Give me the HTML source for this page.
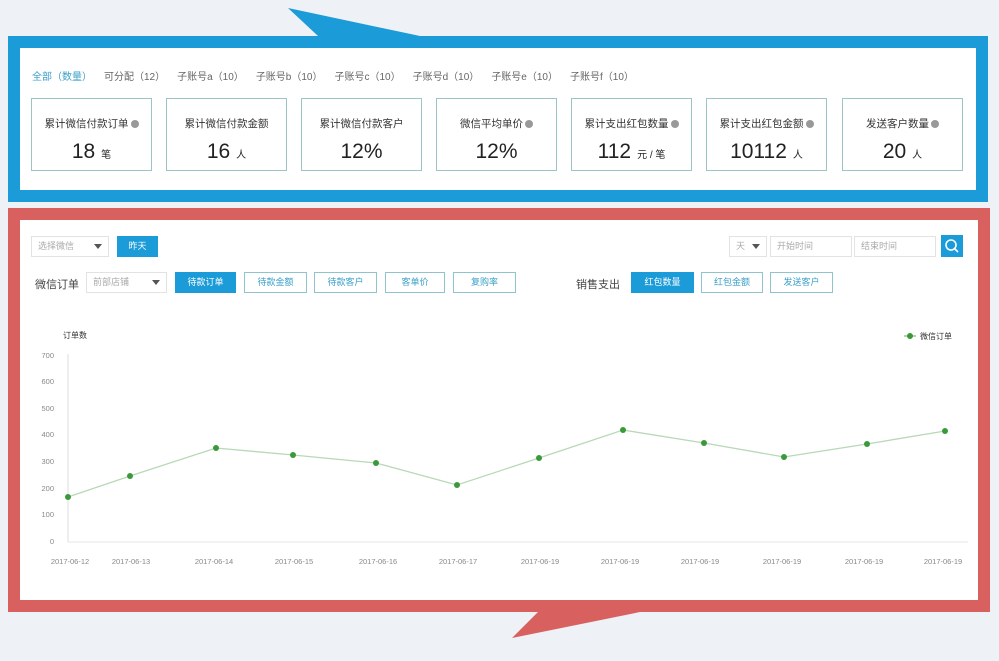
<!DOCTYPE html>
<html><head><meta charset="utf-8"><style>
*{margin:0;padding:0;box-sizing:border-box}
body{width:999px;height:661px;background:#eef1f5;position:relative;overflow:hidden;font-family:"Liberation Sans","Noto Sans CJK SC",sans-serif;color:#333}
.abs{position:absolute}
.blue{left:8px;top:36px;width:980px;height:166px;background:#fff;border:12px solid #1b9bd7}
.red{left:8px;top:208px;width:982px;height:404px;background:#fff;border:12px solid #d8605f}
.tabs{left:32px;top:68px;font-size:10px;color:#666;white-space:nowrap}
.tabs span{margin-right:12px}
.card{top:98px;width:121px;height:73px;border:1px solid #9cc3c6;text-align:center}
.card .t{font-size:10.5px;color:#333;margin-top:17px}
.card .t i{display:inline-block;width:8px;height:8px;border-radius:50%;background:#999;vertical-align:-1px;margin-left:2px}
.card .v{font-size:21px;margin-top:9px;color:#222}
.card .v small{font-size:10px;margin-left:6px}
.btn{height:21px;border:1px solid #8fc4cc;font-size:9px;color:#3aa0c8;text-align:center;line-height:19px}
.btn.on{background:#1b9bd7;border-color:#1b9bd7;color:#fff}
.sel{height:21px;border:1px solid #e2e2e2;font-size:9px;color:#aaa;line-height:19px;padding-left:6px}
.sel b{position:absolute;right:6px;top:7px;border:4px solid transparent;border-top:5px solid #555}
.lbl{font-size:11px;color:#444}
.ax{font-size:7.5px;color:#888}
</style></head><body>
<svg class="abs" style="left:0;top:0" width="999" height="661">
<polygon points="288,8 318,36 420,36" fill="#1b9bd7"/>
<polygon points="540,610 512,638 650,610" fill="#d8605f"/>
</svg>
<div class="abs blue"></div>
<div class="abs red"></div>
<div class="abs tabs"><span style="color:#3aa0c8">全部（数量）</span><span>可分配（12）</span><span>子账号a（10）</span><span>子账号b（10）</span><span>子账号c（10）</span><span>子账号d（10）</span><span>子账号e（10）</span><span>子账号f（10）</span></div>
<div class="abs card" style="left:31px"><div class="t">累计微信付款订单<i></i></div><div class="v">18<small>笔</small></div></div>
<div class="abs card" style="left:166px"><div class="t">累计微信付款金额</div><div class="v">16<small>人</small></div></div>
<div class="abs card" style="left:301px"><div class="t">累计微信付款客户</div><div class="v">12%</div></div>
<div class="abs card" style="left:436px"><div class="t">微信平均单价<i></i></div><div class="v">12%</div></div>
<div class="abs card" style="left:571px"><div class="t">累计支出红包数量<i></i></div><div class="v">112<small>元 / 笔</small></div></div>
<div class="abs card" style="left:706px"><div class="t">累计支出红包金额<i></i></div><div class="v">10112<small>人</small></div></div>
<div class="abs card" style="left:842px"><div class="t">发送客户数量<i></i></div><div class="v">20<small>人</small></div></div>

<div class="abs sel" style="left:31px;top:236px;width:78px">选择微信<b></b></div>
<div class="abs btn on" style="left:117px;top:236px;width:41px">昨天</div>
<div class="abs sel" style="left:729px;top:236px;width:38px">天<b></b></div>
<div class="abs sel" style="left:770px;top:236px;width:82px">开始时间</div>
<div class="abs sel" style="left:854px;top:236px;width:82px">结束时间</div>
<div class="abs" style="left:941px;top:235px;width:22px;height:22px;background:#1b9bd7"><svg width="22" height="22"><circle cx="10" cy="10" r="5" fill="none" stroke="#fff" stroke-width="1.6"/><line x1="14" y1="14" x2="17" y2="17" stroke="#fff" stroke-width="1.6"/></svg></div>
<div class="abs lbl" style="left:35px;top:276px">微信订单</div>
<div class="abs sel" style="left:86px;top:272px;width:81px">前部店铺<b></b></div>
<div class="abs btn on" style="left:175px;top:272px;width:61px">待款订单</div>
<div class="abs btn" style="left:244px;top:272px;width:63px">待款金额</div>
<div class="abs btn" style="left:314px;top:272px;width:63px">待款客户</div>
<div class="abs btn" style="left:385px;top:272px;width:60px">客单价</div>
<div class="abs btn" style="left:453px;top:272px;width:63px">复购率</div>
<div class="abs lbl" style="left:576px;top:276px">销售支出</div>
<div class="abs btn on" style="left:631px;top:272px;width:63px">红包数量</div>
<div class="abs btn" style="left:701px;top:272px;width:62px">红包金额</div>
<div class="abs btn" style="left:770px;top:272px;width:63px">发送客户</div>

<svg class="abs" style="left:0;top:0" width="999" height="661">
<text x="63" y="338" font-size="8" fill="#333" font-family="Liberation Sans,Noto Sans CJK SC,sans-serif">订单数</text>
<line x1="904" y1="336" x2="916" y2="336" stroke="#8ccf8c" stroke-width="1.5"/><circle cx="910" cy="336" r="3" fill="#3a9a3a"/>
<text x="920" y="339" font-size="8" fill="#333" font-family="Liberation Sans,Noto Sans CJK SC,sans-serif">微信订单</text>
<line x1="68" y1="354" x2="68" y2="542" stroke="#ddd"/>
<line x1="68" y1="542" x2="968" y2="542" stroke="#e6e6e6"/>
<g class="ax" font-size="7.5" fill="#888" font-family="Liberation Sans,sans-serif" text-anchor="end">
<text x="54" y="358">700</text><text x="54" y="384">600</text><text x="54" y="411">500</text><text x="54" y="437">400</text><text x="54" y="464">300</text><text x="54" y="491">200</text><text x="54" y="517">100</text><text x="54" y="544">0</text>
</g>
<polyline fill="none" stroke="#b8d8b8" stroke-width="1.3" points="68,497 130,476 216,448 293,455 376,463 457,485 539,458 623,430 704,443 784,457 867,444 945,431"/>
<g fill="#3a9a3a"><circle cx="68" cy="497" r="3"/><circle cx="130" cy="476" r="3"/><circle cx="216" cy="448" r="3"/><circle cx="293" cy="455" r="3"/><circle cx="376" cy="463" r="3"/><circle cx="457" cy="485" r="3"/><circle cx="539" cy="458" r="3"/><circle cx="623" cy="430" r="3"/><circle cx="704" cy="443" r="3"/><circle cx="784" cy="457" r="3"/><circle cx="867" cy="444" r="3"/><circle cx="945" cy="431" r="3"/></g>
<g font-size="7.5" fill="#888" font-family="Liberation Sans,sans-serif" text-anchor="middle">
<text x="70" y="564">2017-06-12</text><text x="131" y="564">2017-06-13</text><text x="214" y="564">2017-06-14</text><text x="294" y="564">2017-06-15</text><text x="378" y="564">2017-06-16</text><text x="458" y="564">2017-06-17</text><text x="540" y="564">2017-06-19</text><text x="620" y="564">2017-06-19</text><text x="700" y="564">2017-06-19</text><text x="782" y="564">2017-06-19</text><text x="864" y="564">2017-06-19</text><text x="943" y="564">2017-06-19</text>
</g>
</svg>
</body></html>
